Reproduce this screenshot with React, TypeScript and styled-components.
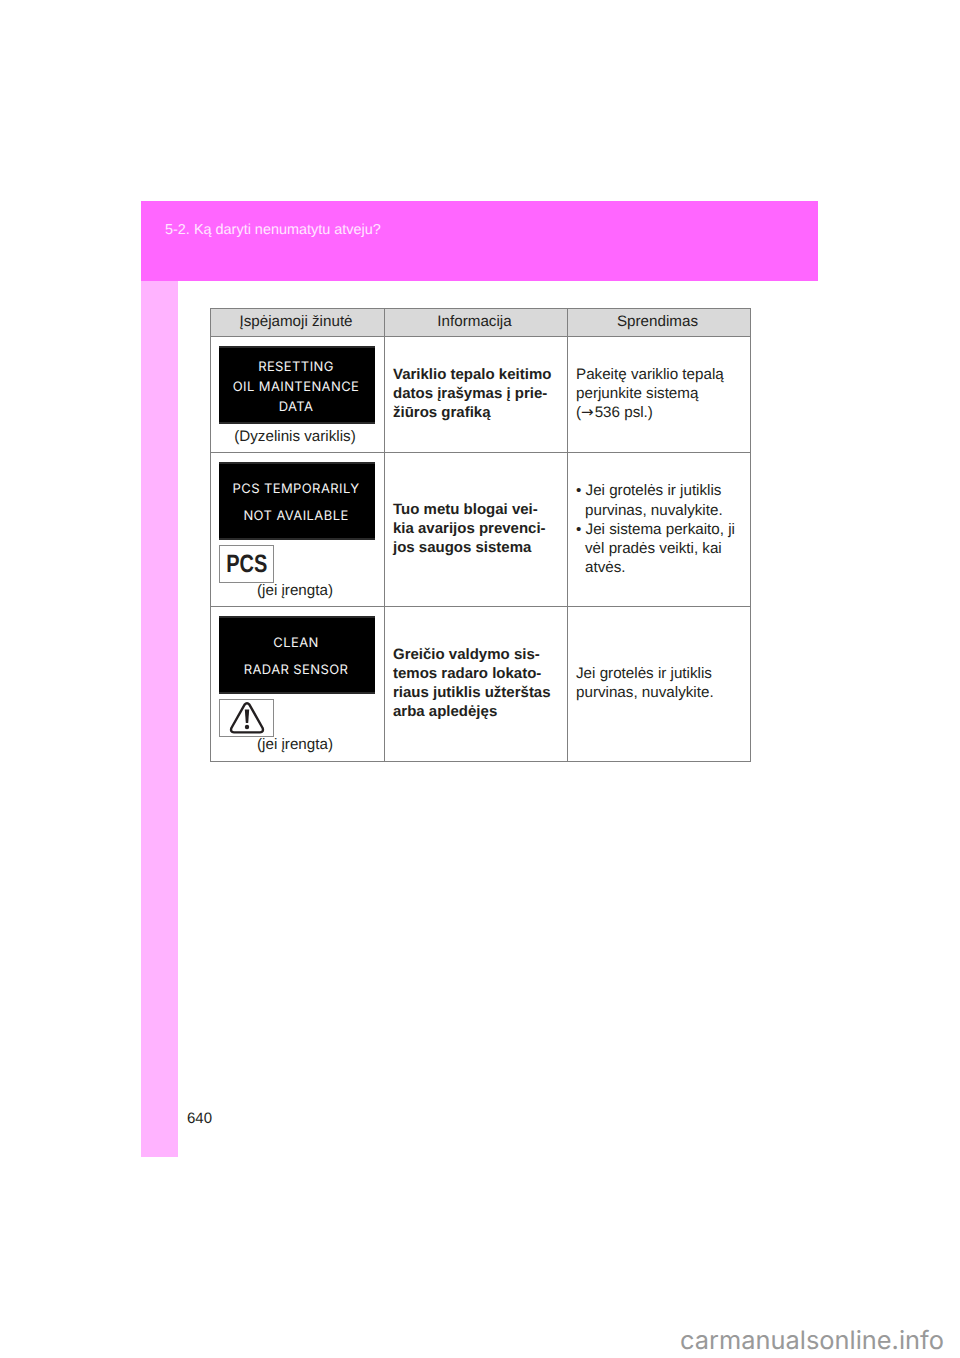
import React from 'react';
import styled, { createGlobalStyle } from 'styled-components';

const GlobalStyle = createGlobalStyle`
  html, body {
    margin: 0;
    padding: 0;
    background: #fff;
    font-family: "Liberation Sans", Arial, sans-serif;
    color: #231f20;
    text-rendering: geometricPrecision;
  }
`;

const Page = styled.div`
  width: 960px;
  height: 1358px;
  padding-top: 201px;
  box-sizing: border-box;
  overflow: hidden;
`;

const Sheet = styled.div`
  width: 677px;
  margin-left: 141px;
`;

const ChapterBar = styled.header`
  height: 80px;
  box-sizing: border-box;
  padding: 21px 0 0 24px;
  background: #ff66ff;
  color: #ffe6ff;
  font-size: 14.45px;
  line-height: 17px;
`;

const Body = styled.div`
  display: flex;
  height: 876px;
`;

const SideStrip = styled.div`
  width: 37px;
  background: #ffb3ff;
`;

const Content = styled.main`
  flex: 1;
  display: flex;
  flex-direction: column;
  justify-content: space-between;
  padding: 27px 0 30px 0;
`;

const Table = styled.table`
  width: 540px;
  margin-left: 32px;
  table-layout: fixed;
  border-collapse: collapse;
  font-size: 15.2px;
  line-height: 19.2px;
`;

const HeadCell = styled.th`
  height: 26px;
  padding: 0 3px 1px 0;
  background: #d9d9d9;
  border: 1px solid #808080;
  font-weight: 400;
  text-align: center;
`;

const Cell = styled.td<{ $h: number }>`
  height: ${p => p.$h}px;
  padding: 0 8px 2px;
  border: 1px solid #808080;
  vertical-align: middle;
  box-sizing: border-box;
`;

const MessageCell = styled(Cell)`
  padding: 9px 8px 0;
  vertical-align: top;
`;

const Display = styled.div<{ $gap: number }>`
  width: 156px;
  height: 78px;
  box-sizing: border-box;
  padding: 3px 2px 0 0;
  display: flex;
  flex-direction: column;
  align-items: center;
  justify-content: center;
  gap: ${p => p.$gap}px;
  background: #000;
  border-top: 2px solid #2a2a2a;
  border-bottom: 2px solid #2a2a2a;
  color: #f4f4f4;
  font-family: Inter, "Liberation Sans", sans-serif;
  font-size: 13px;
  font-weight: 400;
  letter-spacing: 0.4px;
  line-height: 14px;
  white-space: pre;
`;

const Caption = styled.div<{ $top: number }>`
  width: 152px;
  margin-top: ${p => p.$top}px;
  text-align: center;
  line-height: 17px;
`;

const IconBox = styled.div`
  width: 53px;
  height: 36px;
  margin-top: 5px;
  border: 1px solid #8a8a8a;
  display: flex;
  align-items: center;
  justify-content: center;
`;

const PcsMark = styled.span`
  font-size: 25px;
  font-weight: 700;
  line-height: 36px;
  color: #231f20;
  transform: scaleX(0.8);
`;

const Bold = styled.div`
  font-weight: 700;
  font-size: 15px;
`;

const Bullets = styled.ul`
  margin: 0;
  padding: 2px 0 0;
  list-style: none;
`;

const Bullet = styled.li`
  padding-left: 9px;
  text-indent: -9px;
`;

const Arrow = styled.span`
  font-family: "DejaVu Sans", sans-serif;
  font-size: 15px;
  line-height: 1;
  margin-right: 1px;
`;

const PageNumber = styled.div`
  margin-left: 9px;
  font-size: 15px;
  line-height: 17px;
`;

const Watermark = styled.div`
  position: absolute;
  top: 1325px;
  left: 680px;
  font-family: Inter, "Liberation Sans", sans-serif;
  font-size: 25.4px;
  line-height: 32px;
  color: #999;
  white-space: nowrap;
`;

const WarningIcon = () => (
  <svg width="36" height="34" viewBox="0 0 36 34" fill="none">
    <path
      d="M15.6 3.6 Q18 0.9 20.4 3.6 L33.6 27 Q35 31 31 31.4 H5 Q1 31 2.4 27 Z"
      stroke="#231f20"
      strokeWidth="2.4"
      strokeLinejoin="round"
    />
    <path d="M15.8 8.5 H20.2 L19.2 22 H16.8 Z" fill="#231f20" />
    <circle cx="18" cy="26" r="2.2" fill="#231f20" />
  </svg>
);

const App: React.FC = () => (
  <Page>
    <GlobalStyle />
    <Sheet>
      <ChapterBar>5-2. Ką daryti nenumatytu atveju?</ChapterBar>
      <Body>
        <SideStrip />
        <Content>
          <Table>
            <colgroup>
              <col style={{ width: 174 }} />
              <col style={{ width: 183 }} />
              <col style={{ width: 183 }} />
            </colgroup>
            <thead>
              <tr>
                <HeadCell>Įspėjamoji žinutė</HeadCell>
                <HeadCell>Informacija</HeadCell>
                <HeadCell>Sprendimas</HeadCell>
              </tr>
            </thead>
            <tbody>
              <tr>
                <MessageCell $h={116}>
                  <Display $gap={6}>
                    <span>RESETTING</span>
                    <span>OIL MAINTENANCE</span>
                    <span>DATA</span>
                  </Display>
                  <Caption $top={4}>(Dyzelinis variklis)</Caption>
                </MessageCell>
                <Cell $h={116}>
                  <Bold>
                    Variklio tepalo keitimo
                    <br />
                    datos įrašymas į prie-
                    <br />
                    žiūros grafiką
                  </Bold>
                </Cell>
                <Cell $h={116}>
                  Pakeitę variklio tepalą
                  <br />
                  perjunkite sistemą
                  <br />
                  (<Arrow>→</Arrow>536 psl.)
                </Cell>
              </tr>
              <tr>
                <MessageCell $h={154}>
                  <Display $gap={13}>
                    <span>PCS TEMPORARILY</span>
                    <span>NOT AVAILABLE</span>
                  </Display>
                  <IconBox>
                    <PcsMark>PCS</PcsMark>
                  </IconBox>
                  <Caption $top={-1}>(jei įrengta)</Caption>
                </MessageCell>
                <Cell $h={154}>
                  <Bold>
                    Tuo metu blogai vei-
                    <br />
                    kia avarijos prevenci-
                    <br />
                    jos saugos sistema
                  </Bold>
                </Cell>
                <Cell $h={154}>
                  <Bullets>
                    <Bullet>
                      • Jei grotelės ir jutiklis
                      <br />
                      purvinas, nuvalykite.
                    </Bullet>
                    <Bullet>
                      • Jei sistema perkaito, ji
                      <br />
                      vėl pradės veikti, kai
                      <br />
                      atvės.
                    </Bullet>
                  </Bullets>
                </Cell>
              </tr>
              <tr>
                <MessageCell $h={155}>
                  <Display $gap={13}>
                    <span>CLEAN</span>
                    <span>RADAR SENSOR</span>
                  </Display>
                  <IconBox>
                    <WarningIcon />
                  </IconBox>
                  <Caption $top={-1}>(jei įrengta)</Caption>
                </MessageCell>
                <Cell $h={155}>
                  <Bold>
                    Greičio valdymo sis-
                    <br />
                    temos radaro lokato-
                    <br />
                    riaus jutiklis užterštas
                    <br />
                    arba apledėjęs
                  </Bold>
                </Cell>
                <Cell $h={155}>
                  Jei grotelės ir jutiklis
                  <br />
                  purvinas, nuvalykite.
                </Cell>
              </tr>
            </tbody>
          </Table>
          <PageNumber>640</PageNumber>
        </Content>
      </Body>
    </Sheet>
    <Watermark>carmanualsonline.info</Watermark>
  </Page>
);

export default App;
